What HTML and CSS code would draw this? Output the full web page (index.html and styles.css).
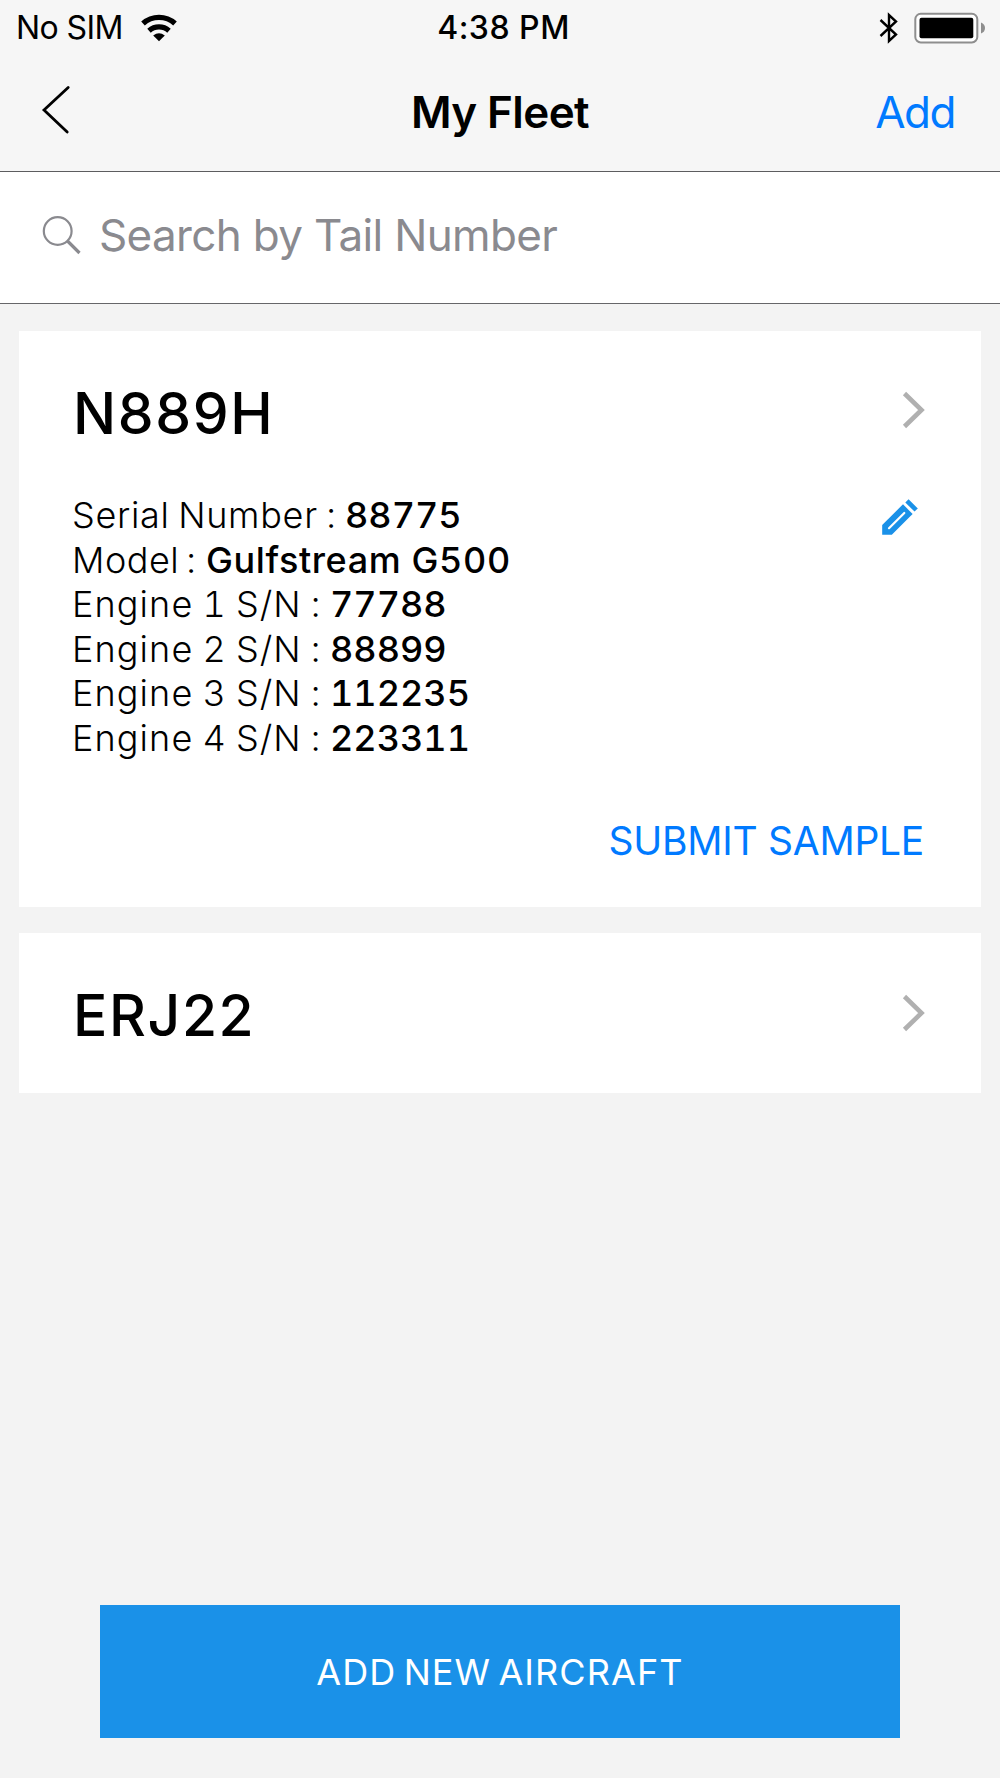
FILE: index.html
```html
<!DOCTYPE html>
<html lang="en">
<head>
  <meta charset="UTF-8" />
  <title>My Fleet</title>
  <link rel="stylesheet" href="styles.css">
</head>
<body>
  <header class="header">
    <div class="status-bar">
      <div class="carrier">
        <span class="sim">No SIM</span>
        <svg class="wifi" width="38" height="28" viewBox="0 0 38 28">
          <path d="M3 9.5 A24 24 0 0 1 35 9.5" fill="none" stroke="#000" stroke-width="5.4" />
          <path d="M9 16.7 A15 15 0 0 1 29 16.7" fill="none" stroke="#000" stroke-width="5.2" />
          <path d="M13.2 21.5 Q19 16.8 24.8 21.5 L19 27.3 Z" fill="#000" />
        </svg>
      </div>
      <span class="time">4:38 PM</span>
      <div class="indicators">
        <svg width="20" height="32" viewBox="0 0 20 32">
          <path d="M1.5 8 L17 22.5 L10 29 V3 L17 9.5 L1.5 24" fill="none" stroke="#000" stroke-width="2.4" />
        </svg>
        <svg class="battery" width="72" height="32" viewBox="0 0 72 32">
          <rect x="1.3" y="1.8" width="62" height="28.6" rx="5.5" fill="#fff" stroke="#8e8e8e" stroke-width="2" />
          <rect x="5.5" y="5.8" width="53.8" height="20.4" rx="2" fill="#000" />
          <path d="M67 10.5 Q71 12 71 16 T67 21.5 Z" fill="#8e8e8e" />
        </svg>
      </div>
    </div>
    <nav class="nav">
      <svg class="back" width="30" height="50" viewBox="0 0 30 50">
        <path d="M27.2 2.5 L3 25 L26.2 47" fill="none" stroke="#000" stroke-width="2.8" stroke-linecap="round" />
      </svg>
      <h1 class="title">My Fleet</h1>
      <a class="add">Add</a>
    </nav>
  </header>

  <div class="search">
    <svg width="40" height="40" viewBox="0 0 40 40">
      <circle cx="15.7" cy="16" r="13.9" fill="none" stroke="#8a8a8f" stroke-width="2.2" />
      <path d="M25.5 26 L37.5 38" stroke="#8a8a8f" stroke-width="3.2" />
    </svg>
    <span>Search by Tail Number</span>
  </div>

  <main class="fleet">
    <section class="card card-open">
      <div class="card-head">
        <h2 class="tail">N889H</h2>
        <svg class="chevron" width="24" height="38" viewBox="0 0 24 38">
          <path d="M2.5 2.5 L19.5 19 L2.5 35.5" fill="none" stroke="#b0b0b0" stroke-width="4.6" />
        </svg>
      </div>
      <div class="card-body">
        <ul class="details">
          <li><span class="serial">Serial Number :</span><b>88775</b></li>
          <li><span class="model">Model :</span><b class="name">Gulfstream G500</b></li>
          <li><span class="engine">Engine 1 S/N :</span><b>77788</b></li>
          <li><span class="engine">Engine 2 S/N :</span><b>88899</b></li>
          <li><span class="engine">Engine 3 S/N :</span><b>112235</b></li>
          <li><span class="engine">Engine 4 S/N :</span><b>223311</b></li>
        </ul>
        <svg class="edit" width="36" height="36" viewBox="0 0 36 36">
          <path d="M0.2 35.8 V26 L21 5.3 L30.6 15 L9.8 35.8 Z" fill="#1a91e8" />
          <path d="M23.3 3.4 L26.6 0.2 L35.8 9.4 L32.5 12.6 Z" fill="#1a91e8" />
          <path d="M7 29.2 L22.3 14" stroke="#fff" stroke-width="2.2" stroke-linecap="round" />
        </svg>
      </div>
      <a class="submit">SUBMIT SAMPLE</a>
    </section>

    <section class="card">
      <div class="card-head">
        <h2 class="tail">ERJ22</h2>
        <svg class="chevron" width="24" height="38" viewBox="0 0 24 38">
          <path d="M2.5 2.5 L19.5 19 L2.5 35.5" fill="none" stroke="#b0b0b0" stroke-width="4.6" />
        </svg>
      </div>
    </section>
  </main>

  <button class="new-aircraft">ADD NEW AIRCRAFT</button>
</body>
</html>
```
FILE: styles.css
```css
* {
  box-sizing: border-box;
}
body {
  margin: 0;
  height: 1778px;
  display: flex;
  flex-direction: column;
  background-color: #f3f3f3;
  font-family: Inter, "Liberation Sans", sans-serif;
  color: #000;
}
h1, h2, ul {
  margin: 0;
  padding: 0;
}
svg {
  display: block;
  flex: none;
}
.header {
  height: 172px;
  background-color: #f6f6f6;
  border-bottom: 1px solid #5c5c5f;
}
.status-bar {
  height: 55px;
  padding: 0 14px 0 16px;
  display: grid;
  grid-template-columns: 1fr auto 1fr;
  align-items: center;
  font-size: 32px;
}
.carrier {
  display: flex;
  align-items: center;
  gap: 17px;
}
.sim {
  letter-spacing: -0.6px;
}
.time {
  margin-left: 5px;
  font-weight: 500;
  letter-spacing: 0.5px;
}
.indicators {
  display: flex;
  justify-content: flex-end;
  align-items: center;
  gap: 15px;
}
.nav {
  height: 114px;
  padding: 0 45px 0 41px;
  display: grid;
  grid-template-columns: 1fr auto 1fr;
  align-items: center;
  font-size: 44px;
}
.back {
  margin-bottom: 4px;
}
.title {
  margin-left: 4px;
  font-size: 44px;
  font-weight: 600;
  letter-spacing: -0.6px;
}
.add {
  justify-self: end;
  letter-spacing: -1.5px;
  color: #007aff;
}
.search {
  height: 132px;
  padding: 0 42px 6px;
  display: flex;
  align-items: center;
  gap: 17px;
  background-color: #fff;
  border-bottom: 1px solid #666669;
  font-size: 44px;
  letter-spacing: -0.66px;
  color: #8a8a8f;
}
.fleet {
  flex: 1;
  padding: 27px 19px 0;
  display: flex;
  flex-direction: column;
  gap: 26px;
}
.card {
  background-color: #fff;
}
.card-open {
  height: 576px;
  display: flex;
  flex-direction: column;
}
.card-head {
  height: 160px;
  padding: 0 55px 0 54px;
  display: flex;
  justify-content: space-between;
  align-items: center;
}
.card-open .chevron {
  margin-bottom: 2px;
}
.tail {
  padding-top: 4px;
  font-size: 57px;
  font-weight: 550;
  letter-spacing: 1.6px;
}
.card-body {
  padding: 2px 63px 0 53px;
  display: flex;
  justify-content: space-between;
  align-items: flex-start;
}
.details {
  list-style: none;
  font-size: 36px;
  font-weight: 300;
  line-height: 44.5px;
  font-variant-numeric: tabular-nums;
}
.details li {
  display: flex;
}
.details b {
  font-weight: 450;
}
.serial {
  width: 273px;
  letter-spacing: 0.7px;
  word-spacing: -1.9px;
}
.model {
  width: 134px;
  letter-spacing: 0.5px;
  word-spacing: -3px;
}
.engine {
  width: 258px;
  letter-spacing: 1.1px;
  word-spacing: -1.7px;
}
.details .name {
  letter-spacing: 0.6px;
}
.edit {
  margin-top: 6px;
}
.submit {
  margin: 53px 57px 0 0;
  align-self: flex-end;
  font-size: 39px;
  line-height: 56px;
  letter-spacing: -0.27px;
  color: #007aff;
}
.new-aircraft {
  width: 800px;
  height: 133px;
  margin: 0 auto 40px;
  border: none;
  background-color: #1a91e8;
  font-family: inherit;
  font-size: 36px;
  font-weight: 400;
  letter-spacing: 1.1px;
  word-spacing: -4px;
  color: #fff;
}
```
